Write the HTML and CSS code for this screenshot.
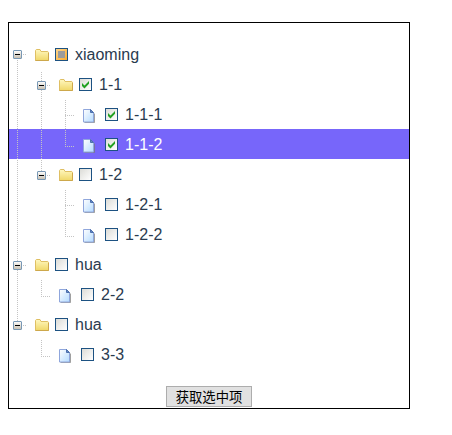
FILE: index.html
```html
<!DOCTYPE html>
<html lang="zh">
<head>
<meta charset="utf-8">
<title>Tree</title>
<link rel="stylesheet" href="styles.css">
</head>
<body>
<svg width="0" height="0" class="defs" aria-hidden="true">
  <defs>
    <linearGradient id="gf" x1="0" y1="0" x2="0" y2="1"><stop offset="0" stop-color="#fff8c0"/><stop offset="1" stop-color="#f0d768"/></linearGradient>
    <linearGradient id="gd" x1="0" y1="0" x2="1" y2="1"><stop offset="0" stop-color="#ffffff"/><stop offset="1" stop-color="#b4dbff"/></linearGradient>
    <linearGradient id="ge" x1="0" y1="0" x2="0" y2="1"><stop offset="0" stop-color="#ffffff"/><stop offset="1" stop-color="#c5bdae"/></linearGradient>
    <symbol id="minus" viewBox="0 0 9 9"><rect x=".5" y=".5" width="8" height="8" rx=".5" fill="url(#ge)" stroke="#7898b5"/><path d="M2 4.5h5" stroke="#000"/></symbol>
    <symbol id="folder" viewBox="0 0 14 12"><path d="M.5 11.5V1.3L1.3.5H5l1 2h6.8l.7.7v8.3z" fill="url(#gf)" stroke="#dfbf63"/><path d="M.5 11.5h13V4" fill="none" stroke="#cda84c"/></symbol>
    <symbol id="doc" viewBox="0 0 13 15"><path d="M1.5 13.5h10V4.5" fill="none" stroke="#777" stroke-opacity=".7"/><path d="M.5.5h7l3 3v9.5H.5z" fill="url(#gd)" stroke="#8fa6dc"/><path d="M7.5.5v3h3z" fill="#6288c5" stroke="#4d70ad"/></symbol>
    <symbol id="tick" viewBox="0 0 13 13"><path d="M3 5v3l2.5 2.5L10 5.8V3L5.5 7.5z" fill="#21a121"/></symbol>
  </defs>
</svg>
<main class="panel">
  <ul class="tree">
    <li class="row root first"><i class="line trunk below"></i><svg class="toggle"><use href="#minus"/></svg><i class="stub"></i><svg class="folder"><use href="#folder"/></svg><span class="check partial"></span><span class="label">xiaoming</span></li>
    <li class="row l1"><i class="line trunk"></i><i class="line branch late"></i><svg class="toggle"><use href="#minus"/></svg><i class="stub"></i><svg class="folder"><use href="#folder"/></svg><span class="check"><svg><use href="#tick"/></svg></span><span class="label">1-1</span></li>
    <li class="row l2"><i class="line trunk"></i><i class="line branch"></i><i class="line twig"></i><i class="elbow mid"></i><svg class="doc"><use href="#doc"/></svg><span class="check"><svg><use href="#tick"/></svg></span><span class="label">1-1-1</span></li>
    <li class="row l2 selected"><i class="line trunk"></i><i class="line branch"></i><i class="line twig end"></i><i class="elbow"></i><svg class="doc"><use href="#doc"/></svg><span class="check"><svg><use href="#tick"/></svg></span><span class="label">1-1-2</span></li>
    <li class="row l1"><i class="line trunk"></i><i class="line branch end"></i><svg class="toggle"><use href="#minus"/></svg><i class="stub"></i><svg class="folder"><use href="#folder"/></svg><span class="check"></span><span class="label">1-2</span></li>
    <li class="row l2"><i class="line trunk"></i><i class="line twig"></i><i class="elbow mid"></i><svg class="doc"><use href="#doc"/></svg><span class="check"></span><span class="label">1-2-1</span></li>
    <li class="row l2"><i class="line trunk"></i><i class="line twig end"></i><i class="elbow"></i><svg class="doc"><use href="#doc"/></svg><span class="check"></span><span class="label">1-2-2</span></li>
    <li class="row root"><i class="line trunk"></i><svg class="toggle"><use href="#minus"/></svg><i class="stub"></i><svg class="folder"><use href="#folder"/></svg><span class="check"></span><span class="label">hua</span></li>
    <li class="row l1 leaf"><i class="line trunk"></i><i class="line branch end"></i><i class="elbow"></i><svg class="doc"><use href="#doc"/></svg><span class="check"></span><span class="label">2-2</span></li>
    <li class="row root"><i class="line trunk end"></i><svg class="toggle"><use href="#minus"/></svg><i class="stub"></i><svg class="folder"><use href="#folder"/></svg><span class="check"></span><span class="label">hua</span></li>
    <li class="row l1 leaf"><i class="line branch end"></i><i class="elbow"></i><svg class="doc"><use href="#doc"/></svg><span class="check"></span><span class="label">3-3</span></li>
  </ul>
  <button class="submit">获取选中项</button>
</main>
</body>
</html>
```

FILE: styles.css
```css
* { box-sizing: border-box; }
body { margin: 22px 8px 0; background: #fff; font-family: "Liberation Sans", Arial, sans-serif; }
.defs { position: absolute; }
.panel { width: 402px; height: 387px; padding-top: 16px; border: 1px solid #000; display: flex; flex-direction: column; align-items: center; }
.tree { width: 100%; margin: 0; padding: 0; list-style: none; }
.row { position: relative; display: flex; align-items: flex-start; height: 30px; padding-left: 4px; font-size: 16px; line-height: 30px; color: #2a3b4f; }
.label { margin-top: 1px; }
.l1 { padding-left: 28px; }
.l2 { padding-left: 56px; }
.selected { background: #7766fa; color: #fff; }
.toggle { width: 9px; height: 9px; margin-top: 12px; position: relative; flex: none; }
.first .toggle { margin-top: 11px; }
.stub { width: 3px; height: 1px; margin: 16px 9px 0 1px; background: repeating-linear-gradient(90deg, #c4c4c4 0 1px, transparent 1px 2px); }
.first .stub { margin-top: 15px; }
.folder { width: 14px; height: 12px; margin: 10px 6px 0 0; }
.doc { width: 13px; height: 15px; margin: 10px 9px 0 9px; }
.check { width: 13px; height: 13px; margin: 9px 7px 0 0; border: 1px solid #1d5282; background: linear-gradient(135deg, #dcdcd7, #fff); }
.check svg { display: block; width: 13px; height: 13px; margin: -1px; }
.partial { background: linear-gradient(#9c9c9c, #9c9c9c) 2px 2px / 7px 7px no-repeat, linear-gradient(135deg, #ffd58c, #faad30); }
.line { position: absolute; top: 1px; bottom: -1px; width: 1px; background: repeating-linear-gradient(#c4c4c4 0 1px, transparent 1px 2px); }
.trunk { left: 8px; }
.branch { left: 32px; }
.twig { left: 56px; }
.below { top: 21px; }
.late { top: 3px; }
.end { bottom: 13px; }
.elbow { width: 9px; height: 1px; margin-top: 17px; background: repeating-linear-gradient(90deg, #c4c4c4 0 1px, transparent 1px 2px); }
.mid { margin-top: 16px; }
.leaf { padding-left: 32px; }
.submit { width: 86px; height: 21px; margin: 17px 0 0; padding: 2px 0 0; border: 1px solid #adadad; background: #e1e1e1; color: #000; font: 13.333px/17px "Liberation Sans", "Noto Sans CJK SC", sans-serif; }
```
